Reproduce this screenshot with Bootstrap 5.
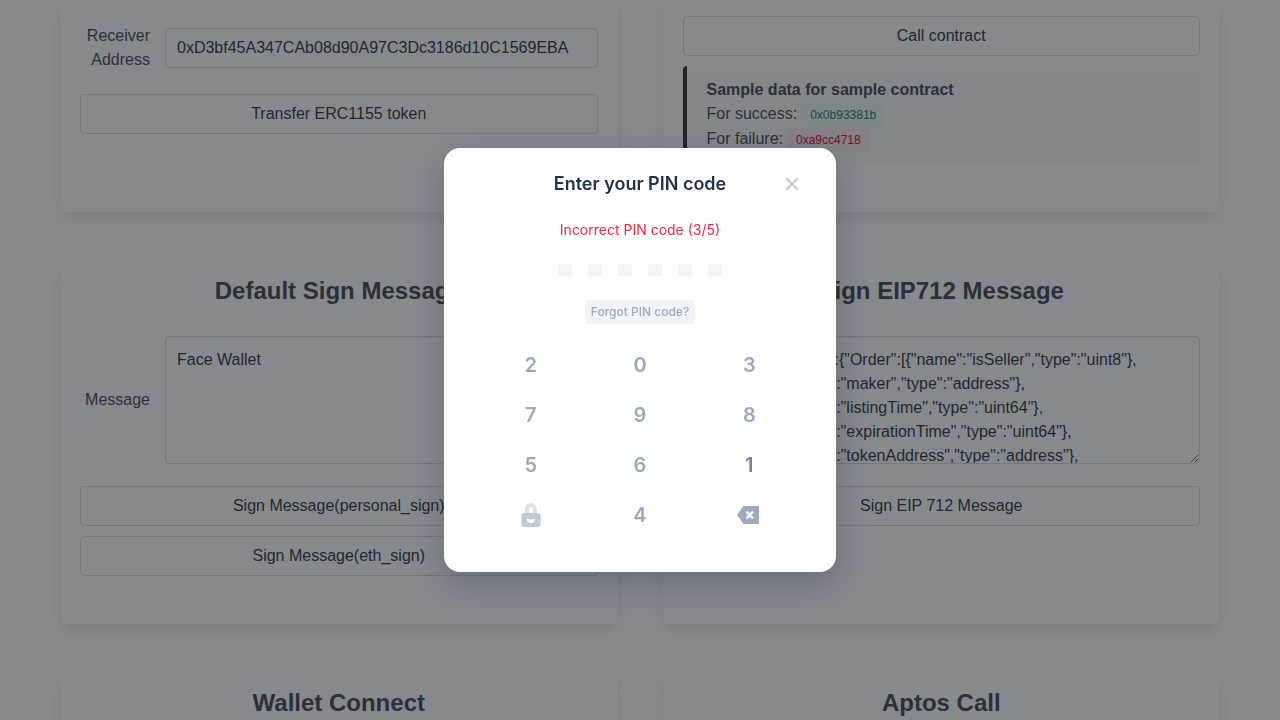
<!DOCTYPE html>
<html lang="en">
<head>
<meta charset="utf-8">
<meta name="viewport" content="width=device-width, initial-scale=1">
<title>Face Wallet</title>
<link href="https://cdn.jsdelivr.net/npm/bootstrap@5.3.0/dist/css/bootstrap.min.css" rel="stylesheet">
<style>
  body { font-family: "Liberation Sans", Arial, sans-serif; font-size: 16px; line-height: 24px; color: #4a4a4a; }
  .panel-grid { display: grid; grid-template-columns: 1fr; gap: 46px 45px; padding: 0 60px 46px; }
  @media (min-width: 768px) { .panel-grid { grid-template-columns: 1fr 1fr; } }
  .panel { min-width: 0; padding: 20px 20px 48px; background: #fff; border-radius: 6px; box-shadow: 0 8px 16px -2px rgba(10,10,10,.1), 0 0 0 1px rgba(10,10,10,.02); }
  .panel-first { padding-top: 16px; border-top-left-radius: 0; border-top-right-radius: 0; }
  .panel-first.with-field { padding-top: 24px; }
  .panel h2 { margin: 0 0 32px; font-size: 24px; line-height: 26px; font-weight: 700; color: #4a4a4a; text-align: center; }
  .field-row { display: flex; align-items: center; gap: 15px; margin-bottom: 22px; }
  .field-label { flex: 0 0 70px; text-align: right; }
  .panel .form-control { font-size: 16px; line-height: 24px; padding: 7px 11px; color: #363636; border-color: #dbdbdb; border-radius: 4px; box-shadow: inset 0 1px 2px rgba(10,10,10,.05); }
  .panel textarea.form-control { height: 128px; padding: 11px; white-space: pre; overflow: hidden; }
  .panel .btn { height: 40px; padding: 7px 16px; font-size: 16px; line-height: 24px; color: #363636; background: #fff; border: 1px solid #dbdbdb; border-radius: 4px; }
  .panel .btn + .btn { margin-top: 10px; }
  .sample { margin-top: 10px; padding: 12px 20px; background: #fafafa; border-left: 4px solid #363636; border-radius: 4px; }
  .sample-line { display: flex; align-items: flex-end; height: 25px; gap: 4px; }
  .sample-line > span:first-child { align-self: flex-start; }
  .hash { height: 24px; padding: 0 9px; font-size: 12px; line-height: 24px; border-radius: 4px; }
  .hash-ok { color: #257953; background: #effaf5; }
  .hash-bad { color: #cc0f35; background: #feecf0; }

  .pin-overlay { background: rgba(14,22,32,.5); }
  .pin-overlay .modal-dialog { max-width: 392px; }
  .pin-overlay .modal-content { padding: 0 32px 32px; font-family: Inter, sans-serif; border: 0; border-radius: 16px; box-shadow: 0 12px 32px rgba(20,20,43,.24); }
  .pin-head { display: grid; grid-template-columns: 24px 1fr 24px; align-items: center; height: 72px; }
  .pin-head h1 { grid-column: 2; margin: 0; font-size: 18px; line-height: 24px; font-weight: 600; color: #23314a; text-align: center; }
  .pin-overlay button { border: 0; background: none; padding: 0; }
  .pin-close { height: 24px; display: flex; align-items: center; justify-content: center; }
  .pin-error { font-size: 14px; line-height: 20px; color: #f42644; }
  .pin-dots { gap: 16px; margin: 24px 0; }
  .pin-dots span { width: 14px; height: 12px; border-radius: 2px; background: #f2f4f8; }
  .pin-overlay .pin-forgot { align-self: center; height: 24px; padding: 0 6px; font-size: 12px; line-height: 24px; font-weight: 500; color: #9ca9be; background: #f2f4f8; border-radius: 4px; }
  .keypad { display: grid; grid-template-columns: repeat(3, 1fr); grid-auto-rows: 50px; margin-top: 16px; }
  .keypad > * { display: flex; align-items: center; justify-content: center; font-size: 20px; line-height: 24px; font-weight: 600; color: #9ca9be; }
  .keypad .key-active { color: #74849e; }
</style>
</head>
<body class="modal-open overflow-hidden">
<main class="panel-grid">
  <section class="panel panel-first with-field">
    <div class="field-row">
      <label class="field-label" for="receiver">Receiver Address</label>
      <input class="form-control" id="receiver" type="text" value="0xD3bf45A347CAb08d90A97C3Dc3186d10C1569EBA">
    </div>
    <button class="btn w-100" type="button">Transfer ERC1155 token</button>
  </section>
  <section class="panel panel-first">
    <button class="btn w-100" type="button">Call contract</button>
    <div class="sample">
      <strong class="d-block">Sample data for sample contract</strong>
      <div class="sample-line"><span>For success:</span> <span class="hash hash-ok">0x0b93381b</span></div>
      <div class="sample-line"><span>For failure:</span> <span class="hash hash-bad">0xa9cc4718</span></div>
    </div>
  </section>
  <section class="panel">
    <h2>Default Sign Message</h2>
    <div class="field-row">
      <label class="field-label" for="message">Message</label>
      <textarea class="form-control" id="message">Face Wallet</textarea>
    </div>
    <button class="btn w-100" type="button">Sign Message(personal_sign)</button>
    <button class="btn w-100" type="button">Sign Message(eth_sign)</button>
  </section>
  <section class="panel">
    <h2>Sign EIP712 Message</h2>
    <div class="field-row">
      <label class="field-label" for="typed">Message</label>
      <textarea class="form-control" id="typed">{"types":{"Order":[{"name":"isSeller","type":"uint8"},
{"name":"maker","type":"address"},
{"name":"listingTime","type":"uint64"},
{"name":"expirationTime","type":"uint64"},
{"name":"tokenAddress","type":"address"},</textarea>
    </div>
    <button class="btn w-100" type="button">Sign EIP 712 Message</button>
  </section>
  <section class="panel"><h2>Wallet Connect</h2></section>
  <section class="panel"><h2>Aptos Call</h2></section>
</main>

<div class="modal d-block pin-overlay" role="dialog" aria-modal="true" aria-labelledby="pin-title">
  <div class="modal-dialog modal-dialog-centered">
    <div class="modal-content">
      <div class="pin-head">
        <h1 id="pin-title">Enter your PIN code</h1>
        <button class="pin-close" type="button" aria-label="Close">
          <svg width="24" height="24" viewBox="0 0 24 24" fill="none" stroke="#c2ccd8" stroke-width="2"><path d="M6.200 6.200l11.600 11.600M17.800 6.200L6.200 17.800"/></svg>
        </button>
      </div>
      <div class="pin-error text-center" role="alert">Incorrect PIN code (3/5)</div>
      <div class="pin-dots d-flex justify-content-center" aria-hidden="true"><span></span><span></span><span></span><span></span><span></span><span></span></div>
      <button class="pin-forgot" type="button">Forgot PIN code?</button>
      <div class="keypad">
        <button type="button">2</button><button type="button">0</button><button type="button">3</button>
        <button type="button">7</button><button type="button">9</button><button type="button">8</button>
        <button type="button">5</button><button type="button">6</button><button type="button" class="key-active">1</button>
        <div aria-hidden="true">
          <svg width="20" height="24" viewBox="0 0 20 24"><path d="M6 12V6a4 4 0 0 1 8 0v6" fill="none" stroke="#dce2ea" stroke-width="4"/><rect y="10" x=".4" width="19.2" height="14" rx="2.4" fill="#c2ccd8"/><path d="M6 16h2.2q1.800 1.400 3.600 0H14a4 4 0 0 1-8 0z" fill="#fff"/></svg>
        </div>
        <button type="button">4</button>
        <button type="button" aria-label="Delete">
          <svg width="24" height="18" viewBox="0 0 24 18"><path d="M6.500 0H21.300a.7.7 0 0 1 .7.7v16.600a.7.7 0 0 1-.7.7H6.500L0 9z" fill="#9ca9be"/><path d="M9.500 5.700l6.500 6.600M16 5.700l-6.500 6.600" stroke="#fff" stroke-width="2.400"/></svg>
        </button>
      </div>
    </div>
  </div>
</div>
<script src="https://cdn.jsdelivr.net/npm/bootstrap@5.3.0/dist/js/bootstrap.bundle.min.js"></script>
</body>
</html>
